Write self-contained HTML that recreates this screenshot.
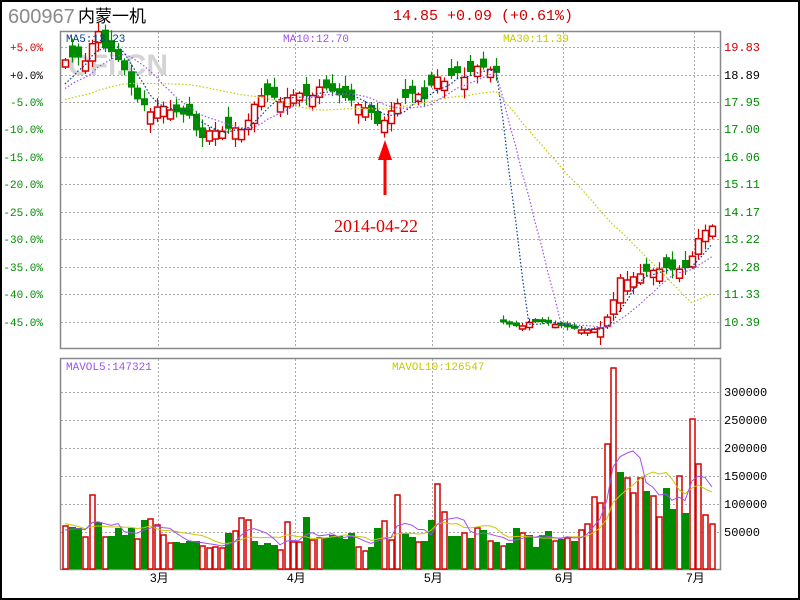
<!DOCTYPE html>
<html><head><meta charset="utf-8"><style>
html,body{margin:0;padding:0;background:#fff;}
#w{position:relative;width:796px;height:596px;border:2px solid #000;overflow:hidden;}
svg{position:absolute;left:-2px;top:-2px;}
</style></head><body><div id="w">
<svg id="s" width="800" height="600" xmlns="http://www.w3.org/2000/svg" font-family="Liberation Mono, monospace">
<text x="8" y="23" font-family="Liberation Sans, sans-serif" font-size="20" fill="#8a8a8a">600967</text>
<text x="78" y="22" font-family="Liberation Sans, 'Noto Sans CJK SC', sans-serif" font-size="17" fill="#000">内蒙一机</text>
<text x="393" y="20" font-size="15" fill="#d00000">14.85 +0.09 (+0.61%)</text>
<g id="grid" stroke="#aaa" stroke-dasharray="2,2" stroke-width="1"></g>
<rect x="60.5" y="31.5" width="660" height="317" fill="none" stroke="#888" stroke-width="1.5"/>
<rect x="60.5" y="358.5" width="660" height="211" fill="none" stroke="#888" stroke-width="1.5"/>
<text x="68" y="75" font-family="Liberation Sans, sans-serif" font-weight="bold" font-size="30" fill="#d4d4d4">CFi.CN</text>
<g id="lbl" font-size="11"></g>
<g id="c"></g>
<text x="66" y="42" font-size="11" fill="#003c8c">MA5:13.23</text>
<text x="283" y="42" font-size="11" fill="#a050f0">MA10:12.70</text>
<text x="503" y="42" font-size="11" fill="#c8c800">MA30:11.39</text>
<text x="66" y="370" font-size="11" fill="#a050f0">MAVOL5:147321</text>
<text x="392" y="370" font-size="11" fill="#c8c800">MAVOL10:126547</text>
<path d="M385 195 L385 150" stroke="#f00" stroke-width="3"/>
<path d="M378 160 L385 140 L392 160 Z" fill="#f00"/>
<text x="334" y="232" font-family="Liberation Serif, serif" font-size="18" fill="#e00000">2014-04-22</text>
</svg></div>
<script>
var s=document.getElementById('c'),g=document.getElementById('grid'),L=document.getElementById('lbl');
var NS='http://www.w3.org/2000/svg';
function el(p,t,a,txt){var e=document.createElementNS(NS,t);for(var k in a)e.setAttribute(k,a[k]);if(txt)e.textContent=txt;p.appendChild(e);return e;}
var py=[47,75,102,129,157,184,212,239,267,294,322];
var pl=['+5.0%','+0.0%','-5.0%','-10.0%','-15.0%','-20.0%','-25.0%','-30.0%','-35.0%','-40.0%','-45.0%'];
var pr=['19.83','18.89','17.95','17.00','16.06','15.11','14.17','13.22','12.28','11.33','10.39'];
py.forEach(function(y,i){
el(g,'line',{x1:61,x2:720,y1:y+.5,y2:y+.5});
var col='#008c00'; if(i==0) col='#d00000'; if(i==1) col='#000';
el(L,'text',{x:43,y:y+4,'text-anchor':'end',fill:col,'font-size':11},pl[i]);
el(L,'text',{x:724,y:y+4,fill:col,'font-size':12},pr[i]);
});
var vl=['300000','250000','200000','150000','100000','50000'];
[392,420,448,476,504,532].forEach(function(y,i){el(g,'line',{x1:61,x2:720,y1:y+.5,y2:y+.5});
el(L,'text',{x:724,y:y+4,fill:'#000','font-size':12},vl[i]);});
[158,295,432,563,694].forEach(function(x,i){el(g,'line',{x1:x+.5,x2:x+.5,y1:32,y2:348});el(g,'line',{x1:x+.5,x2:x+.5,y1:359,y2:569});
el(L,'text',{x:x-8,y:582,fill:'#000','font-size':12,'font-family':"Liberation Sans, 'Noto Sans CJK SC', sans-serif"},(i+3)+'月');});
var V=[[65,526,'r'],[72,527,'g'],[78,528,'g'],[85,537,'r'],[92,495,'r'],[98,522,'g'],[105,537,'r'],[111,536,'g'],[118,528,'g'],[124,535,'g'],[131,528,'g'],[137,539,'r'],[144,520,'g'],[150,519,'r'],[157,525,'r'],[163,535,'r'],[170,543,'r'],[176,542,'g'],[183,543,'g'],[189,541,'g'],[196,541,'g'],[202,546,'r'],[209,548,'r'],[215,547,'r'],[222,548,'r'],[228,533,'g'],[235,531,'r'],[241,518,'r'],[248,520,'r'],[254,541,'g'],[261,545,'g'],[267,543,'g'],[274,545,'g'],[280,550,'r'],[287,522,'r'],[293,542,'r'],[299,542,'r'],[306,517,'g'],[312,540,'r'],[319,538,'r'],[326,538,'g'],[332,535,'g'],[339,536,'g'],[345,539,'g'],[351,533,'g'],[358,547,'r'],[365,551,'r'],[371,547,'g'],[377,528,'g'],[384,521,'r'],[391,540,'r'],[397,495,'r'],[405,533,'g'],[412,537,'g'],[418,542,'r'],[424,541,'g'],[431,520,'g'],[437,484,'r'],[444,512,'r'],[451,536,'g'],[457,536,'g'],[464,533,'r'],[470,538,'g'],[477,528,'r'],[483,530,'g'],[490,541,'r'],[496,542,'g'],[503,546,'r'],[509,543,'g'],[516,528,'g'],[522,533,'r'],[529,535,'g'],[535,547,'g'],[542,535,'g'],[548,531,'g'],[555,541,'r'],[561,539,'g'],[567,538,'r'],[574,541,'g'],[581,530,'r'],[587,524,'r'],[594,497,'r'],[600,503,'r'],[607,444,'r'],[613,368,'r'],[620,472,'g'],[627,478,'r'],[633,493,'r'],[640,478,'r'],[646,491,'g'],[653,496,'r'],[659,517,'r'],[666,488,'g'],[672,509,'g'],[679,476,'r'],[685,513,'g'],[692,419,'r'],[698,464,'r'],[705,515,'r'],[712,524,'r']];
var K=[[60,60],[67,60],[75,56],[87,62],[93,40],[99,30],[105,48],[115,55],[125,72],[135,98],[142,103],[150,112],[160,105],[170,110],[180,114],[190,116],[200,140],[210,130],[220,132],[230,128],[240,128],[245,136],[250,110],[260,96],[270,95],[280,102],[290,96],[300,93],[310,98],[320,86],[330,90],[340,96],[350,100],[360,106],[370,110],[375,125],[385,120],[395,105],[405,98],[415,92],[425,100],[435,76],[445,82],[455,72],[465,78],[475,66],[485,68],[492,70],[499,75],[502,322],[510,325],[520,327],[530,322],[540,322],[550,323],[560,326],[570,328],[580,330],[590,330],[600,328],[606,320],[613,300],[620,278],[627,280],[635,276],[645,272],[655,270],[665,268],[675,270],[685,268],[690,262],[700,233],[706,230],[714,225],[730,225]];
function ip(x){for(var i=0;i<K.length-1;i++){if(x>=K[i][0]&&x<=K[i+1][0]){var t=(x-K[i][0])/(K[i+1][0]-K[i][0]);return K[i][1]+t*(K[i+1][1]-K[i][1]);}}return 225;}
var C=[],VH=[];
V.forEach(function(v){C.push(ip(v[0]));VH.push(569-v[1]);});
V.forEach(function(v,i){var c=C[i];
var o=i?C[i-1]:c+8;
if(Math.abs(o-c)>40)o=c-3;
var jit=((i*13)%7)-3;
o+=jit;
var small=(v[0]>=502&&v[0]<600);
var minB=small?3:7+((i*5)%6);
if(Math.abs(o-c)<minB){o=(v[2]=='r')?c+minB:c-minB;}
if(small&&Math.abs(o-c)>6){o=c+(o>c?5:-5);}
var up=c<o;
var top=Math.min(o,c),bot=Math.max(o,c);var w1=2+((i*5)%9),w2=2+((i*3)%8);
if(small){w1=1+(i%4);w2=1+(i%3);}
var col=up?'#d40000':'#008c00';
el(s,'line',{x1:v[0]+.5,x2:v[0]+.5,y1:top-w1,y2:bot+w2,stroke:col,'stroke-width':1.2});
if(up)el(s,'rect',{x:v[0]-2.5,y:top,width:6,height:Math.max(bot-top,1.5),fill:'#fff',stroke:col,'stroke-width':1.5});
else el(s,'rect',{x:v[0]-3,y:top,width:7,height:Math.max(bot-top,2),fill:col});
var vc=v[2]=='r'?'#d40000':'#008c00';
if(v[2]=='r')el(s,'rect',{x:v[0]-2,y:v[1],width:5,height:569-v[1],fill:'#fff',stroke:vc,'stroke-width':1.5});
else el(s,'rect',{x:v[0]-3,y:v[1],width:7,height:569-v[1],fill:vc});
});
function ma(arr,n,flip,pre){var full=pre.concat(arr),off=pre.length,p=[];for(var i=0;i<arr.length;i++){var a=0,k=0;for(var j=Math.max(0,off+i-n+1);j<=off+i;j++){a+=full[j];k++;}var y=a/k;if(flip)y=569-y;p.push(V[i][0]+','+y.toFixed(1));}return p.join(' ');}
var pre=[];for(var q=0;q<30;q++)pre.push(q<22?105:90);
var vpre=[];for(var q=0;q<10;q++)vpre.push(q<5?55:38);
el(s,'polyline',{points:ma(C,30,false,pre),fill:'none',stroke:'#c8c800','stroke-width':1.2,'stroke-dasharray':'1.5,2'});
el(s,'polyline',{points:ma(C,10,false,pre),fill:'none',stroke:'#a050f0','stroke-width':1.2,'stroke-dasharray':'1.5,2'});
el(s,'polyline',{points:ma(C,5,false,pre),fill:'none',stroke:'#003c8c','stroke-width':1.2,'stroke-dasharray':'1.5,2'});
el(s,'polyline',{points:ma(VH,10,true,vpre),fill:'none',stroke:'#c8c800','stroke-width':1});
el(s,'polyline',{points:ma(VH,5,true,vpre),fill:'none',stroke:'#a050f0','stroke-width':1});
</script>
</body></html>
